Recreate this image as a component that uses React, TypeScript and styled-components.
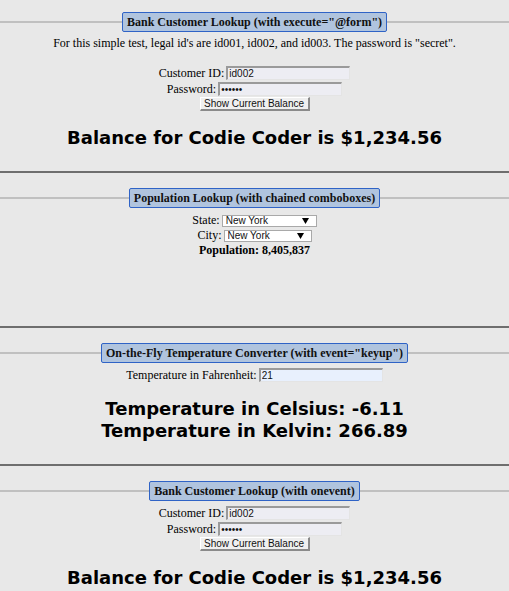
import React from "react";
import styled, { createGlobalStyle } from "styled-components";

const Global = createGlobalStyle`
  html, body { margin: 0; padding: 0; }
  body {
    background: #e8e8e8;
    font-family: "Liberation Serif", "Times New Roman", serif;
    font-size: 12px;
    color: #000;
  }
`;

const Page = styled.div`
  width: 100%;
  overflow: hidden;
`;

const Section = styled.fieldset<{ $bottom?: number }>`
  margin: 15px 0 ${(p) => p.$bottom ?? 0}px;
  &:first-child { margin-top: 12px; }
  padding: 0;
  min-width: 0;
  border: none;
  border-top: 2px solid #c0c0c0;
  text-align: center;
`;

const Legend = styled.legend`
  margin: 0 auto;
  padding: 2px 4px;
  border: 1px solid #2f63c6;
  border-radius: 2px;
  background: #b0c4de;
  font-weight: bold;
  font-size: 12px;
  line-height: 14px;
  color: #111;
`;

const Intro = styled.p`
  margin: 4px 0 0;
  line-height: 14px;
`;

const Form = styled.div<{ $top: number }>`
  margin-top: ${(p) => p.$top}px;
  display: flex;
  flex-direction: column;
`;

const Row = styled.div<{ $h?: number }>`
  display: flex;
  justify-content: center;
  align-items: center;
  gap: 2px;
  height: ${(p) => p.$h ?? 16}px;
  line-height: ${(p) => p.$h ?? 16}px;
`;

const Label = styled.label`
  white-space: nowrap;
`;

const TextInput = styled.input<{ $bg?: string }>`
  box-sizing: border-box;
  width: 124px;
  height: 14px;
  margin: 0;
  padding: 0 1px;
  border-style: solid;
  border-width: 2px 1px 1px 2px;
  border-color: #9a9a9a #e4e4e4 #e4e4e4 #9a9a9a;
  background: ${(p) => p.$bg ?? "#ededf3"};
  font-family: "Liberation Sans", Arial, sans-serif;
  font-size: 10px;
  line-height: 10px;
  color: #111;
  outline: none;
`;

const Button = styled.button`
  box-sizing: border-box;
  width: 110px;
  height: 14px;
  margin: 0;
  padding: 0;
  border-style: solid;
  border-width: 1px 2px 2px 1px;
  border-color: #ffffff #8a8a8a #8a8a8a #ffffff;
  background: #efefef;
  font-family: "Liberation Sans", Arial, sans-serif;
  font-size: 10px;
  line-height: 11px;
  color: #111;
`;

const SelectBox = styled.span<{ $w: number }>`
  box-sizing: border-box;
  display: inline-flex;
  align-items: center;
  width: ${(p) => p.$w}px;
  height: 12px;
  border: 1px solid #a9a9a9;
  background: #fff;
`;

const Select = styled.select`
  appearance: none;
  -webkit-appearance: none;
  flex: 1;
  min-width: 0;
  height: 10px;
  margin: 0;
  padding: 0 0 0 3px;
  border: none;
  background: transparent;
  font-family: "Liberation Sans", Arial, sans-serif;
  font-size: 10px;
  line-height: 10px;
  color: #111;
  outline: none;
`;

const Arrow = styled.svg`
  flex: none;
  width: 7px;
  height: 6px;
  margin-right: 7px;
`;

const Big = styled.div<{ $top: number }>`
  margin-top: ${(p) => p.$top}px;
  font-family: "DejaVu Sans", Verdana, sans-serif;
  font-weight: bold;
  font-size: 18px;
  line-height: 22px;
  color: #000;
`;

const Strong = styled.div`
  font-weight: bold;
`;

const Divider = styled.div<{ $top?: number }>`
  height: 2px;
  margin-top: ${(p) => p.$top ?? 22}px;
  background: #6e6e6e;
`;

const Dropdown = ({ w, value }: { w: number; value: string }) => (
  <SelectBox $w={w}>
    <Select defaultValue={value}>
      <option>{value}</option>
    </Select>
    <Arrow viewBox="0 0 7 6">
      <path d="M0 0H7L3.5 6Z" fill="#000" />
    </Arrow>
  </SelectBox>
);

const LoginForm = ({ top }: { top: number }) => (
  <Form $top={top}>
    <Row>
      <Label>Customer ID:</Label>
      <TextInput defaultValue="id002" />
    </Row>
    <Row>
      <Label>Password:</Label>
      <TextInput type="password" defaultValue="secret" />
    </Row>
    <Row $h={14}>
      <Button>Show Current Balance</Button>
    </Row>
  </Form>
);

export default function App() {
  return (
    <Page>
      <Global />
      <Section>
        <Legend>Bank Customer Lookup (with execute="@form")</Legend>
        <Intro>
          For this simple test, legal id's are id001, id002, and id003. The
          password is "secret".
        </Intro>
        <LoginForm top={15} />
        <Big $top={16}>Balance for Codie Coder is $1,234.56</Big>
      </Section>
      <Divider />
      <Section $bottom={68}>
        <Legend>Population Lookup (with chained comboboxes)</Legend>
        <Form $top={5}>
          <Row $h={15}>
            <Label>State:</Label>
            <Dropdown w={95} value="New York" />
          </Row>
          <Row $h={15}>
            <Label>City:</Label>
            <Dropdown w={88} value="New York" />
          </Row>
          <Row $h={15}>
            <Strong>Population: 8,405,837</Strong>
          </Row>
        </Form>
      </Section>
      <Divider $top={0} />
      <Section>
        <Legend>On-the-Fly Temperature Converter (with event="keyup")</Legend>
        <Form $top={4}>
          <Row>
            <Label>Temperature in Fahrenheit:</Label>
            <TextInput $bg="#e8f0fd" defaultValue="21" />
          </Row>
        </Form>
        <Big $top={15}>
          Temperature in Celsius: -6.11
          <br />
          Temperature in Kelvin: 266.89
        </Big>
      </Section>
      <Divider />
      <Section>
        <Legend>Bank Customer Lookup (with onevent)</Legend>
        <LoginForm top={4} />
        <Big $top={16}>Balance for Codie Coder is $1,234.56</Big>
      </Section>
    </Page>
  );
}
